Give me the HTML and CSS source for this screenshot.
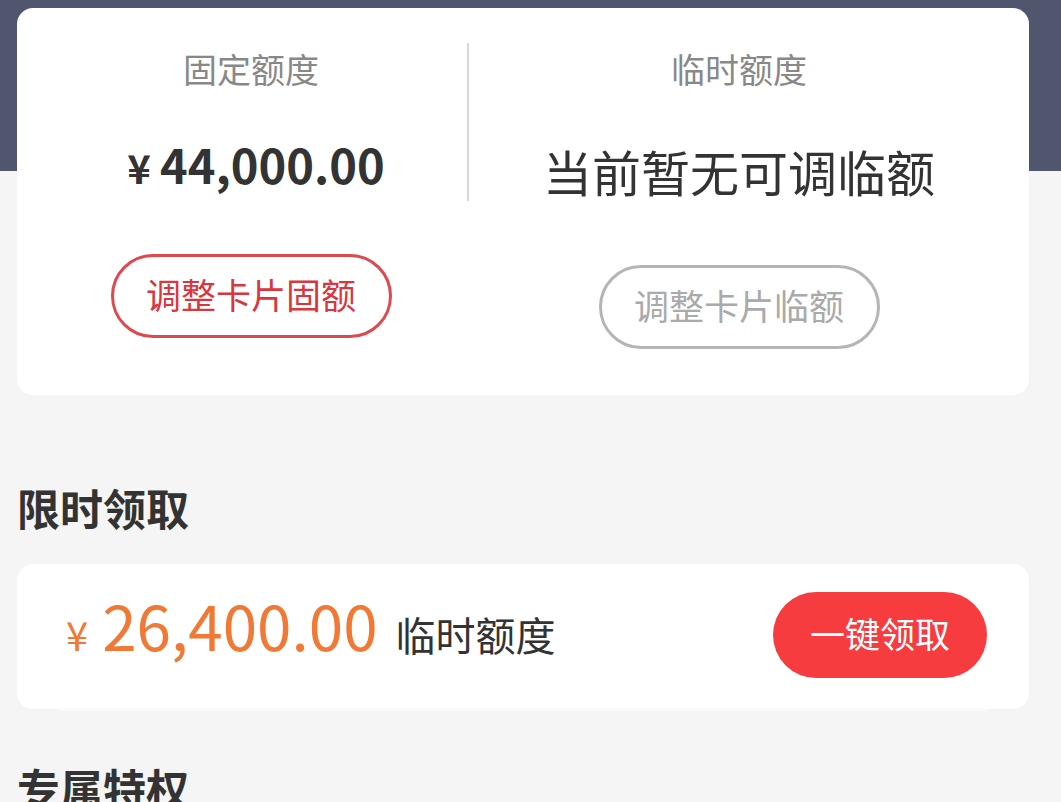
FILE: index.html
```html
<!DOCTYPE html>
<html lang="zh-CN">
<head>
    <meta charset="UTF-8">
    <title>额度管理</title>
    <link rel="stylesheet" href="styles.css">
</head>
<body>
<div class="Page">
    <div class="Quota">
        <div class="Quota-col Quota-col--fixed">
            <div class="Quota-label">固定额度</div>
            <div class="Quota-value"><span class="Quota-yen">¥</span>44,000.00</div>
            <div class="Quota-btn Quota-btn--active">调整卡片固额</div>
        </div>
        <div class="Quota-divider"></div>
        <div class="Quota-col Quota-col--temp">
            <div class="Quota-label">临时额度</div>
            <div class="Quota-empty">当前暂无可调临额</div>
            <div class="Quota-btn Quota-btn--disabled">调整卡片临额</div>
        </div>
    </div>

    <h2 class="Section-title Section-title--first">限时领取</h2>
    <div class="Claim">
        <div class="Claim-amount">
            <span class="Claim-yen">¥</span>
            <span class="Claim-num">26,400.00</span>
            <span class="Claim-unit">临时额度</span>
        </div>
        <div class="Claim-btn">一键领取</div>
    </div>

    <h2 class="Section-title">专属特权</h2>
</div>
</body>
</html>
```

FILE: styles.css
```css
html, body {
    margin: 0;
    padding: 0;
}
body {
    font-family: "Noto Sans CJK SC", "Noto Sans", sans-serif;
    background: linear-gradient(to bottom, #4f566e 0, #4f566e 171px, #f5f5f5 171px);
    background-color: #f5f5f5;
    color: #333;
    height: 802px;
    overflow: hidden;
}
.Page {
    padding: 8px 32px 0 17px;
}

/* top card: fixed / temporary quota */
.Quota {
    display: flex;
    background: #fff;
    border-radius: 16px;
    padding: 0 20px 0 18px;
}
.Quota-col {
    display: flex;
    flex-direction: column;
    align-items: center;
    padding: 38px 0 46px;
}
.Quota-col--fixed {
    width: 432px;
}
.Quota-col--temp {
    flex: 1;
}
.Quota-divider {
    width: 2px;
    height: 158px;
    margin-top: 35px;
    background: #d8d8d8;
}
.Quota-label {
    font-size: 34px;
    line-height: 46px;
    color: #888;
}
.Quota-value {
    margin-top: 35px;
    font-size: 47px;
    line-height: 73px;
    font-weight: bold;
    color: #333;
    padding-left: 10px;
}
.Quota-yen {
    font-size: 40px;
    margin-right: 9px;
}
.Quota-empty {
    margin-top: 35px;
    font-size: 49px;
    line-height: 88px;
    color: #333;
}
.Quota-btn {
    box-sizing: border-box;
    width: 281px;
    height: 84px;
    margin-top: 50px;
    padding-bottom: 5px;
    border-radius: 42px;
    border: 3px solid;
    display: flex;
    align-items: center;
    justify-content: center;
    font-size: 35px;
}
.Quota-btn--active {
    border-color: #dc4a4f;
    color: #d9363e;
}
.Quota-btn--disabled {
    border-color: #b5b5b5;
    color: #aaa;
}

/* sections */
.Section-title {
    margin: 48px 0 0;
    font-size: 43px;
    line-height: 60px;
    font-weight: bold;
    color: #333;
}
.Section-title--first {
    margin-top: 82px;
}

.Claim {
    position: relative;
    margin-top: 27px;
    height: 145px;
    box-sizing: border-box;
    padding: 0 42px 0 49px;
    background: #fff;
    border-radius: 16px;
    display: flex;
    align-items: center;
    justify-content: space-between;
}
.Claim::after {
    content: '';
    position: absolute;
    left: 43px;
    right: 43px;
    bottom: -2px;
    height: 3px;
    background: #fbfbfb;
}
.Claim-amount {
    display: flex;
    align-items: baseline;
    margin-bottom: 26px;
}
.Claim-yen {
    font-size: 40px;
    color: #f07a35;
    margin-right: 14px;
}
.Claim-num {
    font-size: 62px;
    color: #f07a35;
}
.Claim-unit {
    font-size: 40px;
    color: #333;
    margin-left: 18px;
}
.Claim-btn {
    box-sizing: border-box;
    width: 214px;
    height: 86px;
    margin-top: -3px;
    padding-bottom: 6px;
    border-radius: 43px;
    background: #f63c3f;
    color: #fff;
    font-size: 35px;
    display: flex;
    align-items: center;
    justify-content: center;
}
```
